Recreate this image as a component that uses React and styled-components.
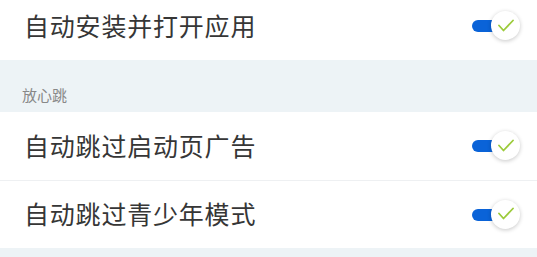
import React from 'react';
import styled, { createGlobalStyle } from 'styled-components';

const GlobalStyle = createGlobalStyle`
  html, body {
    margin: 0;
    padding: 0;
    background: #edf3f6;
    overflow: hidden;
  }
  body {
    font-family: "Noto Sans CJK SC", "Noto Sans", sans-serif;
  }
`;

const Page = styled.div`
  width: 537px;
  margin-top: -8px;
  background: #edf3f6;
`;

const Group = styled.div`
  background: #fff;
`;

const Row = styled.div`
  height: 68px;
  display: flex;
  align-items: center;
  justify-content: space-between;
  padding: 0 17px 0 24px;
  box-sizing: border-box;
  border-top: ${(p) => (p.divided ? '1px solid #eef0f2' : 'none')};
`;

const Title = styled.span`
  font-size: 25px;
  line-height: 1;
  color: #363636;
  letter-spacing: 0.8px;
  margin-bottom: 2px;
`;

const SectionLabel = styled.div`
  height: 52px;
  box-sizing: border-box;
  padding: 24px 0 0 22px;
  font-size: 15px;
  color: #888;
`;

const Switch = styled.div`
  position: relative;
  width: 50px;
  height: 30px;
`;

const Track = styled.div`
  position: absolute;
  left: 2px;
  top: 9px;
  width: 30px;
  height: 12px;
  border-radius: 6px;
  background: #0a63d8;
`;

const Knob = styled.div`
  position: absolute;
  right: 0;
  top: 0;
  width: 29px;
  height: 29px;
  border-radius: 50%;
  background: #fff;
  box-shadow: 0 1px 4px rgba(0, 0, 0, 0.22);
  display: flex;
  align-items: center;
  justify-content: center;
`;

const Toggle = () => (
  <Switch>
    <Track />
    <Knob>
      <svg width="18" height="14" viewBox="0 0 18 14">
        <path d="M2 6.5 L6.5 11.5 L16 1.5" fill="none" stroke="#9ccb3b" strokeWidth="1.8" strokeLinecap="round" strokeLinejoin="round" />
      </svg>
    </Knob>
  </Switch>
);

export default function App() {
  return (
    <Page>
      <GlobalStyle />
      <Group>
        <Row>
          <Title>自动安装并打开应用</Title>
          <Toggle />
        </Row>
      </Group>
      <SectionLabel>放心跳</SectionLabel>
      <Group>
        <Row>
          <Title>自动跳过启动页广告</Title>
          <Toggle />
        </Row>
        <Row divided>
          <Title>自动跳过青少年模式</Title>
          <Toggle />
        </Row>
      </Group>
    </Page>
  );
}
